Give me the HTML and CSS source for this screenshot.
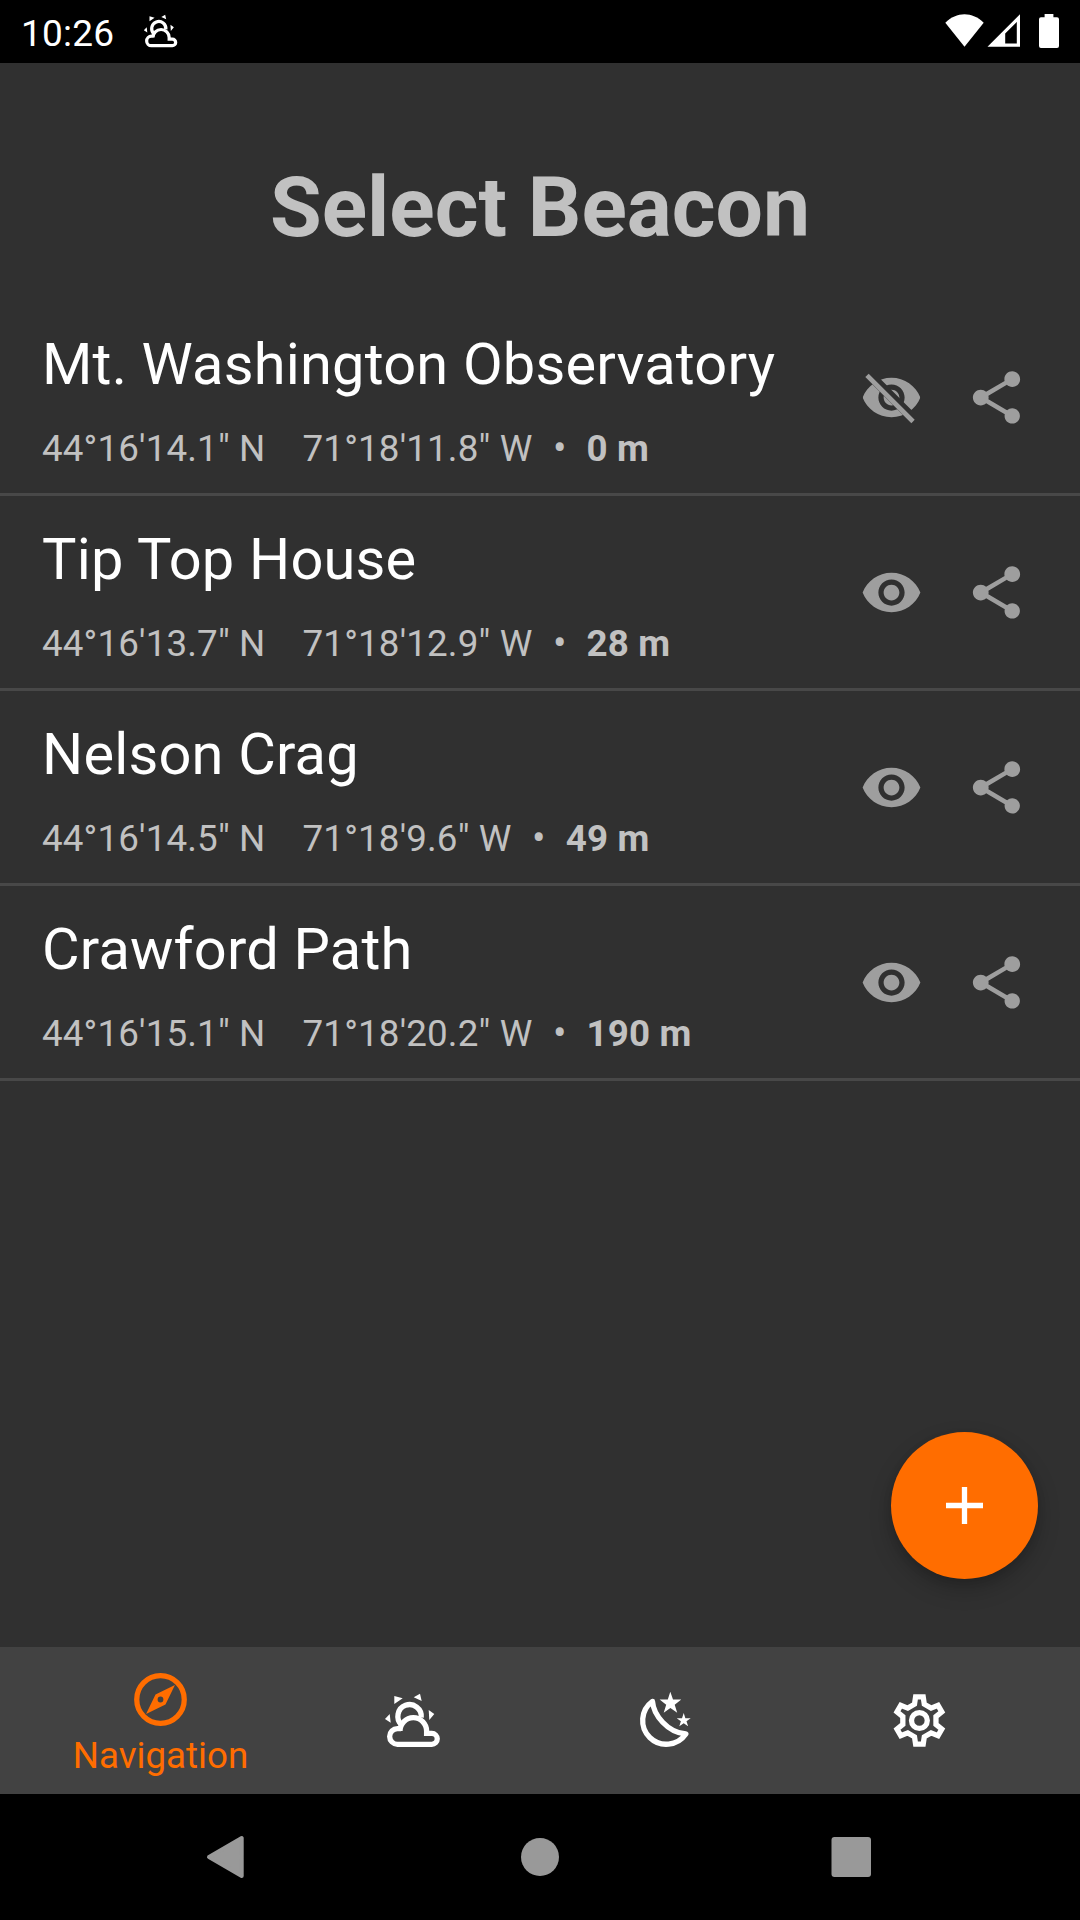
FILE: index.html
```html
<!DOCTYPE html>
<html lang="en">
<head>
<meta charset="utf-8">
<title>Select Beacon</title>
<link rel="stylesheet" href="styles.css">
</head>
<body>
<svg class="defs" aria-hidden="true">
  <defs>
    <symbol id="weather" viewBox="0 0 63 63">
      <path fill="none" stroke="currentColor" stroke-width="5.3" d="M19.5 35.8A11.7 11.7 0 1 1 39.2 28.5"/>
      <path fill="none" stroke="currentColor" stroke-width="5.3" d="M18 42A13.3 13.3 0 0 1 44.6 42V44.4H49.8A5.45 5.45 0 0 1 49.8 55.3H15.5A7.85 7.85 0 0 1 15.5 39.6H19"/>
      <path fill="currentColor" d="M12.3 7 20.7 9.3 12.3 15ZM31.7 8.3 38 4.7 39.7 12ZM46.7 21 52.3 25 47.3 31ZM3 30 7.7 25 8.7 33.7Z"/>
    </symbol>
    <symbol id="eye" viewBox="0 0 24 24">
      <path fill="currentColor" d="M12 4.5C7 4.5 2.73 7.61 1 12c1.73 4.39 6 7.5 11 7.5s9.27-3.11 11-7.5c-1.73-4.39-6-7.5-11-7.5zM12 17c-2.76 0-5-2.24-5-5s2.24-5 5-5 5 2.24 5 5-2.24 5-5 5zm0-8c-1.66 0-3 1.34-3 3s1.34 3 3 3 3-1.34 3-3-1.34-3-3-3z"/>
    </symbol>
    <clipPath id="strike"><path d="M2 4.27 19.73 22 22.27 19.46 4.54 1.73V1H23V23H1V4.27Z"/></clipPath>
    <symbol id="eye-off" viewBox="0 0 24 24">
      <g clip-path="url(#strike)"><use href="#eye" width="24" height="24"/></g>
      <path fill="none" stroke="currentColor" stroke-width="1.8" d="M2.67 3.6 20.2 21.13"/>
    </symbol>
    <symbol id="share" viewBox="0 0 24 24">
      <path fill="currentColor" d="M18 16.08c-.76 0-1.44.3-1.96.77L8.91 12.7c.05-.23.09-.46.09-.7s-.04-.47-.09-.7l7.05-4.11c.54.5 1.25.81 2.04.81 1.66 0 3-1.34 3-3s-1.34-3-3-3-3 1.34-3 3c0 .24.04.47.09.7L8.04 9.81C7.5 9.31 6.79 9 6 9c-1.66 0-3 1.34-3 3s1.34 3 3 3c.79 0 1.5-.31 2.04-.81l7.12 4.16c-.05.21-.08.43-.08.65 0 1.61 1.31 2.92 2.92 2.92s2.92-1.31 2.92-2.92-1.31-2.92-2.92-2.92z"/>
    </symbol>
  </defs>
</svg>
<div class="screen">
  <header class="status">
    <span class="clock">10:26</span>
    <svg class="status-weather"><use href="#weather"/></svg>
    <svg class="status-icons" viewBox="0 0 120 63">
      <path fill="#fff" d="M5.3 22.7C16.5 11.3 32.5 11.3 43.7 22.7L24.5 46.7Z"/>
      <path fill="#fff" fill-rule="evenodd" d="M47.5 46.8 80 14.3V46.8ZM65.2 33.5V43.6H76.8V22Z"/>
      <path fill="#fff" d="M104.6 14H113.4V17.3H117a2 2 0 0 1 2 2V46a2 2 0 0 1-2 2H101a2 2 0 0 1-2-2V19.3a2 2 0 0 1 2-2H104.6Z"/>
    </svg>
  </header>
  <main class="content">
    <h1 class="title">Select Beacon</h1>
    <ul class="list">
      <li class="row">
        <div class="info"><div class="name">Mt. Washington Observatory</div>
        <div class="meta"><span class="coords">44°16'14.1" N&nbsp;&nbsp;&nbsp;&nbsp;71°18'11.8" W</span><span class="dot">•</span><b>0 m</b></div></div>
        <svg class="icon"><use href="#eye-off"/></svg><svg class="icon"><use href="#share"/></svg>
      </li>
      <li class="row">
        <div class="info"><div class="name">Tip Top House</div>
        <div class="meta"><span class="coords">44°16'13.7" N&nbsp;&nbsp;&nbsp;&nbsp;71°18'12.9" W</span><span class="dot">•</span><b>28 m</b></div></div>
        <svg class="icon"><use href="#eye"/></svg><svg class="icon"><use href="#share"/></svg>
      </li>
      <li class="row">
        <div class="info"><div class="name">Nelson Crag</div>
        <div class="meta"><span class="coords">44°16'14.5" N&nbsp;&nbsp;&nbsp;&nbsp;71°18'9.6" W</span><span class="dot">•</span><b>49 m</b></div></div>
        <svg class="icon"><use href="#eye"/></svg><svg class="icon"><use href="#share"/></svg>
      </li>
      <li class="row">
        <div class="info"><div class="name">Crawford Path</div>
        <div class="meta"><span class="coords">44°16'15.1" N&nbsp;&nbsp;&nbsp;&nbsp;71°18'20.2" W</span><span class="dot">•</span><b>190 m</b></div></div>
        <svg class="icon"><use href="#eye"/></svg><svg class="icon"><use href="#share"/></svg>
      </li>
    </ul>
    <button class="fab" aria-label="Add beacon"><svg viewBox="0 0 63 63"><path fill="none" stroke="#fff" stroke-width="5.3" d="M13 31.5H50M31.5 13V50"/></svg></button>
  </main>
  <nav class="tabs">
    <a class="tab active">
      <svg class="tab-icon" viewBox="0 0 24 24"><circle cx="12" cy="12" r="9.05" fill="none" stroke="currentColor" stroke-width="2"/><path fill="currentColor" fill-rule="evenodd" d="M17.5 6.5 13.9 13.9 6.5 17.5 10.1 10.1ZM12 10.9a1.1 1.1 0 1 0 0 2.2 1.1 1.1 0 0 0 0-2.2Z"/></svg>
      <span class="label">Navigation</span>
    </a>
    <a class="tab">
      <svg class="tab-icon"><use href="#weather"/></svg>
    </a>
    <a class="tab">
      <svg class="tab-icon" viewBox="0 0 63 63">
        <path fill="none" stroke="currentColor" stroke-width="5.3" stroke-linejoin="round" d="M17.5 12.4A23.65 23.65 0 1 0 50.8 45C32.5 43.5 18.5 26 17.5 12.4Z"/>
        <path fill="currentColor" d="M35.3 2.7 38 10.6 46.3 10.6 39.7 15.7 42.2 23.8 35.4 19 28.7 23.8 31.2 15.7 24.6 10.6 32.8 10.6ZM48.7 24 50.4 29.2 55.7 29.2 51.5 32.3 53.1 37.3 48.7 34.2 44.3 37.3 45.9 32.3 41.7 29.2 47 29.2Z"/>
      </svg>
    </a>
    <a class="tab">
      <svg class="tab-icon" viewBox="0 0 63 63">
        <g transform="translate(31.4 31.5)" fill="none" stroke="currentColor" stroke-width="5.3">
          <circle r="7.9"/>
          <path d="M-4.9-16.3-3.8-23.7H3.8L4.9-16.3 11.67-12.39 18.62-15.14 22.42-8.56 16.57-3.91V3.91L22.42 8.56 18.62 15.14 11.67 12.39 4.9 16.3 3.8 23.7H-3.8L-4.9 16.3-11.67 12.39-18.62 15.14-22.42 8.56-16.57 3.91V-3.91L-22.42-8.56-18.62-15.14-11.67-12.39Z"/>
        </g>
      </svg>
    </a>
  </nav>
  <footer class="sysnav">
    <svg viewBox="0 0 1080 126">
      <path fill="#999" stroke="#999" stroke-width="4" stroke-linejoin="round" d="M209 63 241.7 44V82Z"/>
      <circle cx="540" cy="63" r="19" fill="#999"/>
      <rect x="831.5" y="43" width="39.5" height="40" rx="3" fill="#999"/>
    </svg>
  </footer>
</div>
</body>
</html>
```

FILE: styles.css
```css
* { box-sizing: border-box; }
body { margin: 0; background: #000; font-family: Roboto, sans-serif; }
.defs { position: absolute; width: 0; height: 0; }
.screen { width: 1080px; height: 1920px; display: flex; flex-direction: column; background: #303030; overflow: hidden; }
.status { height: 63px; background: #000; color: #fff; display: flex; align-items: center; padding-left: 21px; }
.clock { font-size: 37px; letter-spacing: 0.2px; line-height: 63px; width: 120.5px; padding-top: 3px; }
.status-weather { width: 38.4px; height: 38.4px; margin-bottom: 1px; color: #fff; }
.status-icons { width: 120px; height: 63px; margin-left: auto; margin-right: 20px; }
.content { flex: 1; position: relative; }
.title { margin: 0; height: 238px; padding-top: 95px; text-align: center; font-size: 84px; line-height: 100px; font-weight: 700; color: #c1c1c1; }
.list { list-style: none; margin: 0; padding: 0; }
.row { height: 195px; border-bottom: 3px solid #484848; padding: 0 52px 0 42px; display: flex; align-items: center; gap: 42px; color: #9e9e9e; }
.info { flex: 1; white-space: nowrap; align-self: flex-start; padding-top: 28px; }
.name { font-size: 57.75px; line-height: 70px; letter-spacing: 0.19px; color: #fff; }
.meta { font-size: 36.75px; line-height: 44px; letter-spacing: 0.15px; margin-top: 28px; color: #c1c1c1; display: flex; }
.dot { margin: 0 20px 0 20.5px; font-size: 40px; }
.icon { width: 63px; height: 63px; flex: none; }
.fab { position: absolute; right: 42px; bottom: 68px; width: 147px; height: 147px; border: 0; padding: 0; border-radius: 50%; background: #ff6d00; display: grid; place-items: center; box-shadow: 0 10px 22px rgba(0,0,0,.22), 0 3px 8px rgba(0,0,0,.1); }
.fab svg { width: 63px; height: 63px; }
.tabs { height: 147px; background: #424242; display: flex; padding: 0 34px; color: #fff; }
.tab { flex: 1; display: flex; flex-direction: column; align-items: center; justify-content: center; }
.tab.active { color: #ff6d00; justify-content: flex-start; padding-top: 21px; }
.tab-icon { width: 63px; height: 63px; }
.label { font-size: 36.75px; line-height: 44px; margin-top: 3px; }
.sysnav { height: 126px; background: #000; }
.sysnav svg { display: block; width: 1080px; height: 126px; }
```
